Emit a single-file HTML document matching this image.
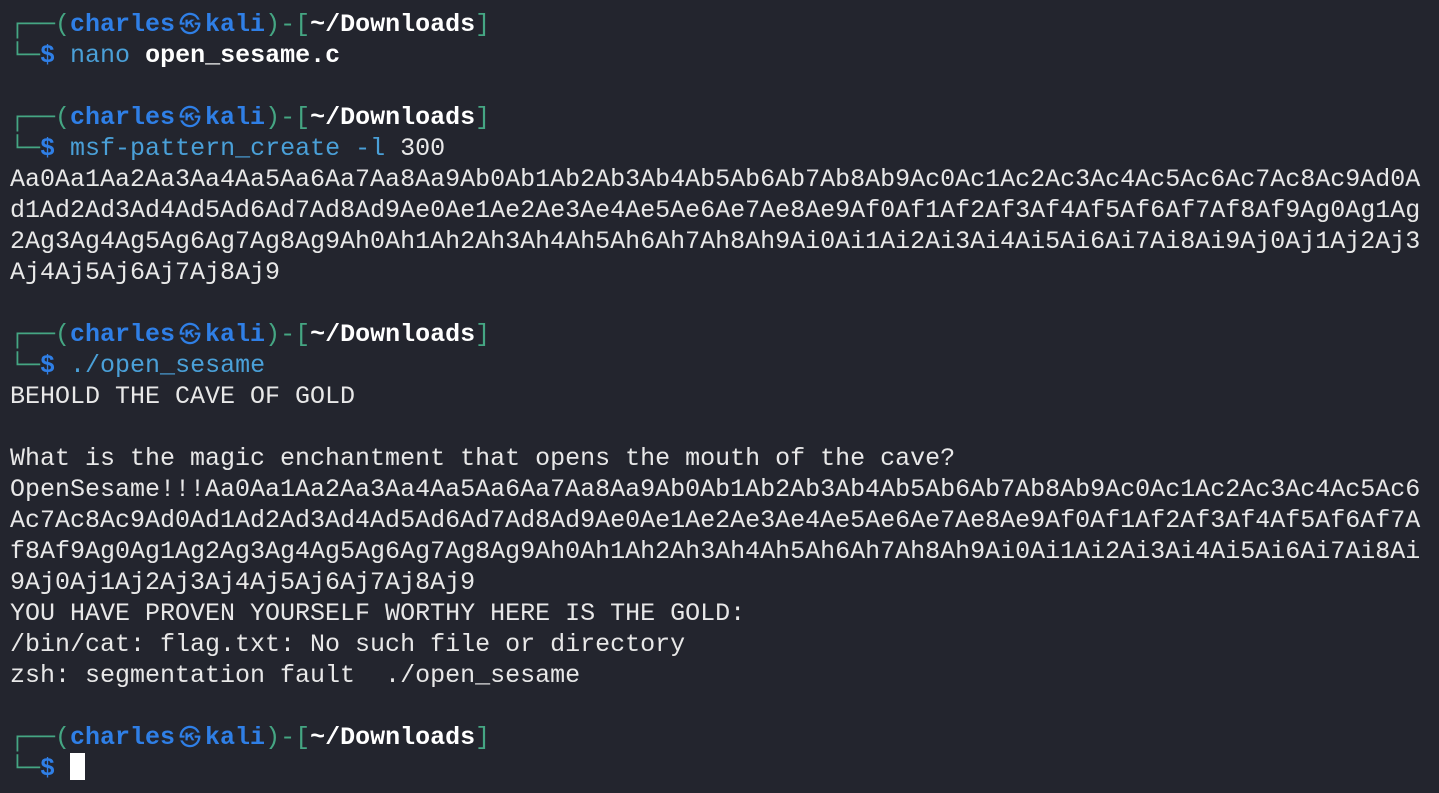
<!DOCTYPE html>
<html><head><meta charset="utf-8"><style>
html,body{margin:0;padding:0;background:#23252e;width:1439px;height:793px;overflow:hidden}
pre{margin:0;position:absolute;left:10px;top:9px;font-family:"Liberation Mono","DejaVu Sans Mono","Noto Sans CJK JP",monospace;font-size:25px;line-height:31px;color:#e8e8e8;white-space:pre}
.g{color:#45a683}.b{color:#2f7fe6;font-weight:bold}.w{color:#fff;font-weight:bold}.c{color:#4aa0d8}
.k{display:inline-block;width:30px;height:20px;line-height:20px;text-align:center;font-size:22px;vertical-align:-1px}
.cur{display:inline-block;width:15px;height:27px;background:#fff;vertical-align:-5px;line-height:0}
</style></head><body><pre><span class="g">┌──(</span><span class="b">charles<span class="k">㉿</span>kali</span><span class="g">)-[</span><span class="w">~/Downloads</span><span class="g">]</span>
<span class="g">└─</span><span class="b">$</span> <span class="c">nano</span> <span class="w">open_sesame.c</span>

<span class="g">┌──(</span><span class="b">charles<span class="k">㉿</span>kali</span><span class="g">)-[</span><span class="w">~/Downloads</span><span class="g">]</span>
<span class="g">└─</span><span class="b">$</span> <span class="c">msf-pattern_create -l</span> 300
Aa0Aa1Aa2Aa3Aa4Aa5Aa6Aa7Aa8Aa9Ab0Ab1Ab2Ab3Ab4Ab5Ab6Ab7Ab8Ab9Ac0Ac1Ac2Ac3Ac4Ac5Ac6Ac7Ac8Ac9Ad0A
d1Ad2Ad3Ad4Ad5Ad6Ad7Ad8Ad9Ae0Ae1Ae2Ae3Ae4Ae5Ae6Ae7Ae8Ae9Af0Af1Af2Af3Af4Af5Af6Af7Af8Af9Ag0Ag1Ag
2Ag3Ag4Ag5Ag6Ag7Ag8Ag9Ah0Ah1Ah2Ah3Ah4Ah5Ah6Ah7Ah8Ah9Ai0Ai1Ai2Ai3Ai4Ai5Ai6Ai7Ai8Ai9Aj0Aj1Aj2Aj3
Aj4Aj5Aj6Aj7Aj8Aj9

<span class="g">┌──(</span><span class="b">charles<span class="k">㉿</span>kali</span><span class="g">)-[</span><span class="w">~/Downloads</span><span class="g">]</span>
<span class="g">└─</span><span class="b">$</span> <span class="c">./open_sesame</span>
BEHOLD THE CAVE OF GOLD

What is the magic enchantment that opens the mouth of the cave?
OpenSesame!!!Aa0Aa1Aa2Aa3Aa4Aa5Aa6Aa7Aa8Aa9Ab0Ab1Ab2Ab3Ab4Ab5Ab6Ab7Ab8Ab9Ac0Ac1Ac2Ac3Ac4Ac5Ac6
Ac7Ac8Ac9Ad0Ad1Ad2Ad3Ad4Ad5Ad6Ad7Ad8Ad9Ae0Ae1Ae2Ae3Ae4Ae5Ae6Ae7Ae8Ae9Af0Af1Af2Af3Af4Af5Af6Af7A
f8Af9Ag0Ag1Ag2Ag3Ag4Ag5Ag6Ag7Ag8Ag9Ah0Ah1Ah2Ah3Ah4Ah5Ah6Ah7Ah8Ah9Ai0Ai1Ai2Ai3Ai4Ai5Ai6Ai7Ai8Ai
9Aj0Aj1Aj2Aj3Aj4Aj5Aj6Aj7Aj8Aj9
YOU HAVE PROVEN YOURSELF WORTHY HERE IS THE GOLD:
/bin/cat: flag.txt: No such file or directory
zsh: segmentation fault  ./open_sesame

<span class="g">┌──(</span><span class="b">charles<span class="k">㉿</span>kali</span><span class="g">)-[</span><span class="w">~/Downloads</span><span class="g">]</span>
<span class="g">└─</span><span class="b">$</span> <span class="cur"></span></pre></body></html>
